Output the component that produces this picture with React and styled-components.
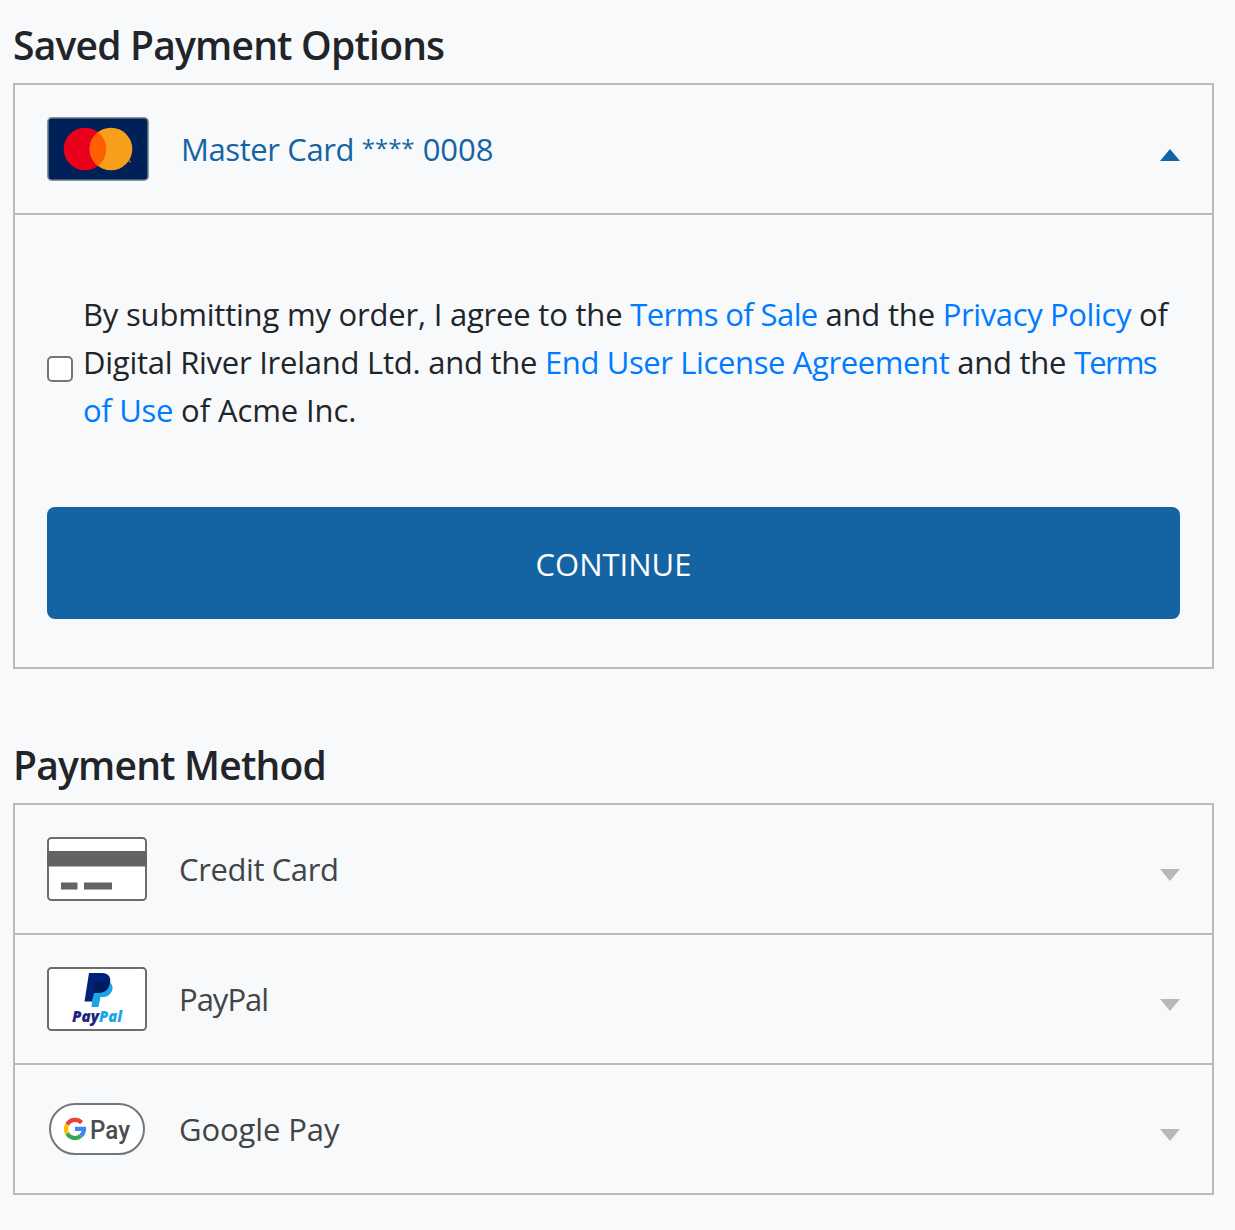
import React, { useState } from 'react';
import styled, { createGlobalStyle } from 'styled-components';

const GlobalStyle = createGlobalStyle`
  *, *::before, *::after { box-sizing: border-box; }
  html { background: #f8f9fb; }
  body {
    margin: 0;
    background: #f8f9fb;
    color: #212529;
    font-family: 'Segoe UI', 'Open Sans', 'Noto Sans', sans-serif;
    font-size: 31px;
    line-height: 48px;
  }
`;

const Page = styled.main`
  width: 1235px;
  min-height: 1230px;
  padding: 21px 21px 35px 13px;
  display: flex;
  flex-direction: column;
  gap: 72px;
`;

const Section = styled.section`
  display: flex;
  flex-direction: column;
  gap: 14px;
`;

const Heading = styled.h2`
  margin: 0;
  font-size: 39px;
  line-height: 48px;
  font-weight: 600;
  letter-spacing: -0.8px;
`;

const Accordion = styled.div`
  border: 2px solid #b7b9bb;
`;

const Item = styled.div`
  & + & { border-top: 2px solid #b7b9bb; }
`;

const Row = styled.div`
  height: 128px;
  padding: 0 32px;
  display: flex;
  align-items: center;
  color: ${(p) => (p.$open ? '#1464a3' : '#414547')};
  cursor: pointer;
`;

const IconSlot = styled.span`
  width: ${(p) => p.$width}px;
  height: 64px;
  margin-right: 32px;
  display: flex;
  flex: none;
  svg { display: block; overflow: visible; }
`;

const Label = styled.span`
  flex: 1;
  margin-bottom: 1px;
  white-space: nowrap;
`;

const Run = styled.span`
  letter-spacing: ${(p) => p.$spacing}px;
`;

const Mask = styled.span`
  font-size: 24px;
  line-height: 0;
  vertical-align: 4px;
`;

const Arrow = styled.svg`
  width: 20px;
  height: 12px;
  margin-top: 12px;
  flex: none;
  fill: ${(p) => (p.$open ? '#1464a3' : '#b7b9b8')};
`;

const Panel = styled.div`
  border-top: 2px solid #b7b9bb;
  padding: 75px 32px 48px;
  display: flex;
  flex-direction: column;
  gap: 73px;
`;

const Consent = styled.label`
  display: flex;
  align-items: center;
  gap: 10px;
`;

const Checkbox = styled.input`
  appearance: none;
  width: 26px;
  height: 26px;
  margin: 14px 0 0;
  flex: none;
  border: 2px solid #767676;
  border-radius: 5px;
  background: #fff;
`;

const Terms = styled.span`
  display: flex;
  flex-direction: column;
`;

const Line = styled.span`
  white-space: nowrap;
  letter-spacing: ${(p) => p.$spacing}px;
`;

const Link = styled.a`
  color: #007bff;
  text-decoration: none;
  letter-spacing: ${(p) => p.$spacing}px;
`;

const Continue = styled.button`
  height: 112px;
  padding: 2px 0 0;
  border: 0;
  border-radius: 8px;
  background: #1464a3;
  color: #fff;
  font: inherit;
`;

const MasterCardIcon = () => (
  <svg width="102" height="64" viewBox="0 0 102 64">
    <rect x="0.8" y="0.8" width="100.4" height="62.4" rx="4" fill="#002157" stroke="#8e939b" strokeWidth="1.6" />
    <circle cx="38" cy="32" r="21.3" fill="#eb001b" />
    <circle cx="64" cy="32" r="21.3" fill="#f79e1b" />
    <path d="M51 15.1A21.3 21.3 0 0 1 51 48.9A21.3 21.3 0 0 1 51 15.1Z" fill="#ff5f00" />
    <circle cx="83" cy="44.500" r="1" fill="#b57a2b" />
  </svg>
);

const CreditCardIcon = () => (
  <svg width="100" height="64" viewBox="0 0 100 64">
    <rect x="1" y="1" width="98" height="62" rx="3.500" fill="#fff" stroke="#6d6d6d" strokeWidth="2" />
    <rect y="14" width="100" height="15.500" fill="#636363" />
    <rect x="14" y="45.500" width="16.500" height="7" fill="#636363" />
    <rect x="37" y="45.500" width="28" height="7" fill="#636363" />
  </svg>
);

const PayPalIcon = () => (
  <svg width="100" height="64" viewBox="0 0 100 64">
    <rect x="1" y="1" width="98" height="62" rx="3.500" fill="#fff" stroke="#6d6d6d" strokeWidth="2" />
    <path d="M47 14H61C67 17 67 24 62 28C59 30.500 56 30 53.500 30L51.500 40H44.500Z" fill="#1aa5e3" />
    <path d="M42 6H55C62 6 65 11 62.500 18C60.500 24.500 56 26 48.500 26H47L45 34.500H37.500Z" fill="#00217a" />
    <path d="M48 15H62.500C61.500 23 56.500 26 48.500 26H46.500Z" fill="#001b5c" />
    <text y="55" fontFamily="'Open Sans', sans-serif" fontSize="16" fontWeight="800" fontStyle="italic">
      <tspan x="25" textLength="27" lengthAdjust="spacingAndGlyphs" fill="#20247f">Pay</tspan>
      <tspan x="52" textLength="23" lengthAdjust="spacingAndGlyphs" fill="#1aa5e3">Pal</tspan>
    </text>
  </svg>
);

const GooglePayIcon = () => (
  <svg width="100" height="64" viewBox="0 0 100 64">
    <rect x="3" y="7" width="94" height="50" rx="25" fill="#fff" stroke="#74777a" strokeWidth="2" />
    <g fill="none" strokeWidth="4.200">
      <path d="M34.600 25.700A9 9 0 0 0 20.200 27.500" stroke="#ea4335" />
      <path d="M20.200 27.500A9 9 0 0 0 20.200 36.500" stroke="#fbbc04" />
      <path d="M20.200 36.500A9 9 0 0 0 33.800 38.900" stroke="#34a853" />
      <path d="M28 31.800H37A9 9 0 0 1 33.800 38.900" stroke="#4285f4" />
    </g>
    <text x="43" y="41.500" textLength="40" lengthAdjust="spacingAndGlyphs" fontFamily="Roboto, sans-serif" fontSize="26" fontWeight="500" fill="#4a4e52">Pay</text>
  </svg>
);

const METHODS = [
  { Icon: CreditCardIcon, name: 'Credit Card', spacing: -0.4 },
  { Icon: PayPalIcon, name: 'PayPal', spacing: -1 },
  { Icon: GooglePayIcon, name: 'Google Pay', spacing: -0.1 },
];

function PaymentRow({ children, Icon, width = 100, open }) {
  return (
    <Row $open={open}>
      <IconSlot $width={width}><Icon /></IconSlot>
      <Label>{children}</Label>
      <Arrow $open={open} viewBox="0 0 20 12">
        <path d={open ? 'M0 12L10 0L20 12Z' : 'M0 0H20L10 12Z'} />
      </Arrow>
    </Row>
  );
}

export default function App() {
  const [agreed, setAgreed] = useState(false);
  return (
    <>
      <GlobalStyle />
      <Page>
        <Section>
          <Heading>Saved Payment Options</Heading>
          <Accordion>
            <Item>
              <PaymentRow Icon={MasterCardIcon} width={102} open>
                <Run $spacing={-0.4}>Master Card </Run>
                <Mask>****</Mask>
                <Run $spacing={0}> 0008</Run>
              </PaymentRow>
              <Panel>
                <Consent>
                  <Checkbox type="checkbox" checked={agreed} onChange={(e) => setAgreed(e.target.checked)} />
                  <Terms>
                    <Line $spacing={-0.2}>By submitting my order, I agree to the <Link $spacing={-0.6}>Terms of Sale</Link> and the <Link $spacing={-0.37}>Privacy Policy</Link> of</Line>
                    <Line $spacing={-0.25}>Digital River Ireland Ltd. and the <Link $spacing={-0.38}>End User License Agreement</Link> and the <Link $spacing={-1.8}>Terms</Link></Line>
                    <Line $spacing={-0.1}><Link $spacing={-0.3}>of Use</Link> of Acme Inc.</Line>
                  </Terms>
                </Consent>
                <Continue type="button">CONTINUE</Continue>
              </Panel>
            </Item>
          </Accordion>
        </Section>
        <Section>
          <Heading>Payment Method</Heading>
          <Accordion>
            {METHODS.map(({ name, spacing, Icon }) => (
              <Item key={name}>
                <PaymentRow Icon={Icon}><Run $spacing={spacing}>{name}</Run></PaymentRow>
              </Item>
            ))}
          </Accordion>
        </Section>
      </Page>
    </>
  );
}
